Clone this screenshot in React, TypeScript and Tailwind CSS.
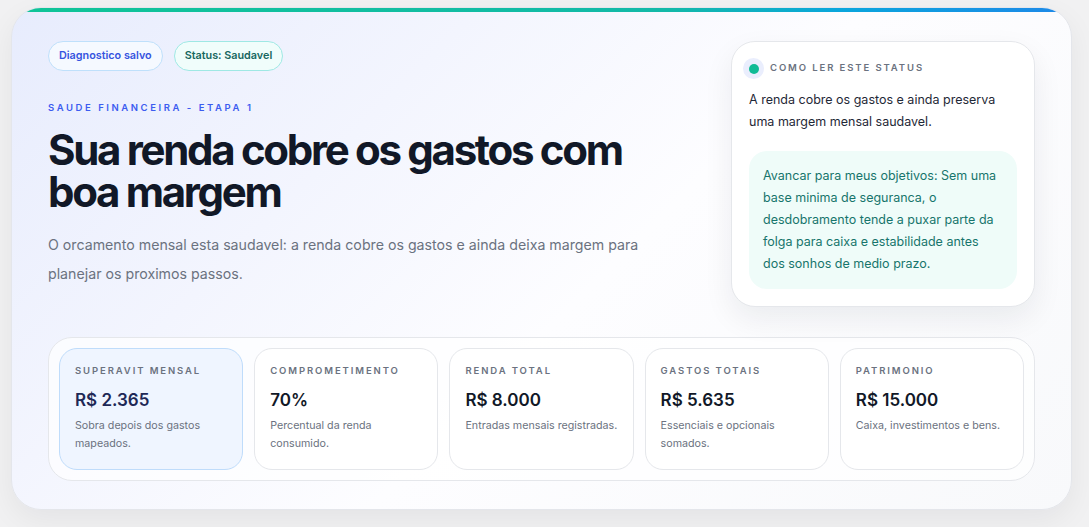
const stats = [
  { label: 'SUPERAVIT MENSAL', value: 'R$ 2.365', desc: 'Sobra depois dos gastos mapeados.', active: true },
  { label: 'COMPROMETIMENTO', value: '70%', desc: 'Percentual da renda consumido.' },
  { label: 'RENDA TOTAL', value: 'R$ 8.000', desc: 'Entradas mensais registradas.' },
  { label: 'GASTOS TOTAIS', value: 'R$ 5.635', desc: 'Essenciais e opcionais somados.' },
  { label: 'PATRIMONIO', value: 'R$ 15.000', desc: 'Caixa, investimentos e bens.' },
];

export default function App() {
  return (
    <div className="min-h-[527px] bg-[#f1f1f2] pl-[11px] pr-[17px] pt-[7px] font-['Inter',sans-serif]">
      <div className="relative overflow-hidden rounded-[30px] border border-[#e4e6eb] bg-[linear-gradient(135deg,#e7ecfd_0%,#f3f5fe_30%,#fdfdff_55%,#f8f9fb_100%)] shadow-[0_10px_30px_rgba(15,23,42,0.06)]">
        <div className="h-[4px] bg-[linear-gradient(90deg,#0fc497_0%,#13b9a8_62%,#0aa6dc_78%,#1e88e8_100%)]" />
        <div className="px-[36px] pt-[29px] pb-[28px]">
          <div className="grid grid-cols-[1fr_304px] gap-[50px]">
            <div>
              <div className="flex gap-[11px]">
                <span className="flex h-[30px] items-center rounded-full border border-[#bfe0fb] bg-[#f5f9ff] px-[10px] text-[10.8px] font-semibold text-[#3554e0]">
                  Diagnostico salvo
                </span>
                <span className="flex h-[30px] items-center rounded-full border border-[#9fe8e4] bg-[#f0fdfb] px-[10px] text-[10.8px] font-semibold text-[#17675f]">
                  Status: Saudavel
                </span>
              </div>
              <div className="mt-[29px] text-[9.5px] font-semibold leading-[15px] tracking-[0.27em] text-[#3c5cf0]">
                SAUDE FINANCEIRA - ETAPA 1
              </div>
              <h1 className="mt-[14px] text-[42px] font-bold leading-[42px] tracking-[-0.055em] text-[#111827]">
                Sua renda cobre os gastos com boa margem
              </h1>
              <p className="mt-[17px] max-w-[615px] text-[14.2px] leading-[29px] text-[#6b7280]">
                O orcamento mensal esta saudavel: a renda cobre os gastos e ainda deixa margem para planejar os proximos passos.
              </p>
            </div>
            <div className="rounded-[24px] border border-[#e5e7eb] bg-white px-[17px] pt-[16px] pb-[17px] shadow-[0_12px_30px_rgba(15,23,42,0.07)]">
              <div className="flex items-center gap-[6px]">
                <span className="-ml-[6px] flex h-[21px] w-[21px] items-center justify-center rounded-full bg-[#eaeefd]">
                  <span className="h-[10px] w-[10px] rounded-full bg-[#10bb95]" />
                </span>
                <span className="text-[9.5px] font-semibold tracking-[0.2em] text-[#6b7280]">COMO LER ESTE STATUS</span>
              </div>
              <p className="mt-[10px] text-[12.5px] leading-[22px] text-[#1f2937]">
                A renda cobre os gastos e ainda preserva uma margem mensal saudavel.
              </p>
              <div className="mt-[18px] rounded-[18px] bg-[#effcf9] px-[14px] py-[14px] text-[12.5px] leading-[22px] text-[#17756c]">
                Avancar para meus objetivos: Sem uma base minima de seguranca, o desdobramento tende a puxar parte da folga para caixa e estabilidade antes dos sonhos de medio prazo.
              </div>
            </div>
          </div>
          <div className="mt-[30px] grid grid-cols-5 gap-[11px] rounded-[24px] border border-[#e5e7eb] bg-white/70 p-[10px]">
            {stats.map((s) => (
              <div
                key={s.label}
                className={`h-[122px] rounded-[18px] border pl-[15px] pr-[10px] pt-[15px] ${
                  s.active ? 'border-[#bfdcfb] bg-[#eff5ff]' : 'border-[#e5e7eb] bg-white'
                }`}
              >
                <div className="text-[9.5px] font-semibold leading-[14px] tracking-[0.2em] text-[#6b7280]">{s.label}</div>
                <div className={`mt-[10px] text-[17px] font-semibold leading-[24px] ${s.active ? 'text-[#1e2856]' : 'text-[#111827]'}`}>
                  {s.value}
                </div>
                <div className="mt-[5px] text-[10.7px] leading-[18px] text-[#6b7280]">{s.desc}</div>
              </div>
            ))}
          </div>
        </div>
      </div>
    </div>
  );
}
